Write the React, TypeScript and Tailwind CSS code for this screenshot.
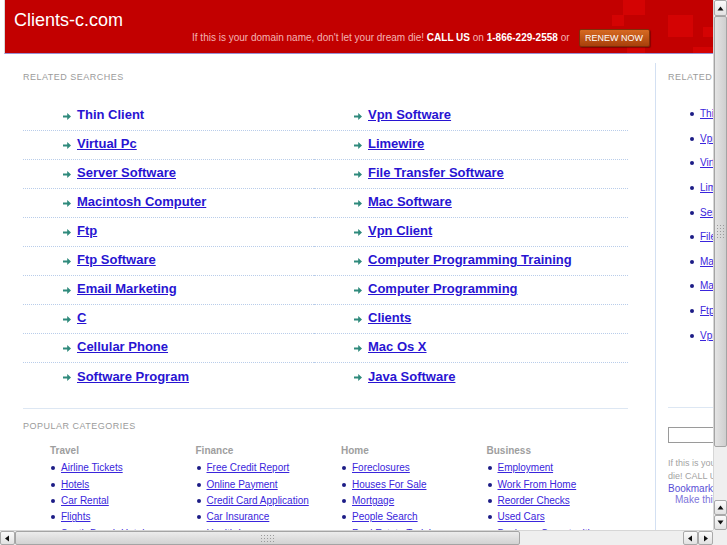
import type { ReactNode } from 'react';

const leftSearches = [
  'Thin Client',
  'Virtual Pc',
  'Server Software',
  'Macintosh Computer',
  'Ftp',
  'Ftp Software',
  'Email Marketing',
  'C',
  'Cellular Phone',
  'Software Program',
];

const rightSearches = [
  'Vpn Software',
  'Limewire',
  'File Transfer Software',
  'Mac Software',
  'Vpn Client',
  'Computer Programming Training',
  'Computer Programming',
  'Clients',
  'Mac Os X',
  'Java Software',
];

const sideSearches = [
  'Thin Client',
  'Vpn Software',
  'Virtual Pc',
  'Limewire',
  'Server Software',
  'File Transfer Software',
  'Macintosh Computer',
  'Mac Software',
  'Ftp',
  'Vpn Client',
];

const categories = [
  { title: 'Travel', items: ['Airline Tickets', 'Hotels', 'Car Rental', 'Flights', 'South Beach Hotels'] },
  { title: 'Finance', items: ['Free Credit Report', 'Online Payment', 'Credit Card Application', 'Car Insurance', 'Health Insurance'] },
  { title: 'Home', items: ['Foreclosures', 'Houses For Sale', 'Mortgage', 'People Search', 'Real Estate Training'] },
  { title: 'Business', items: ['Employment', 'Work From Home', 'Reorder Checks', 'Used Cars', 'Business Opportunities'] },
];

const squares = [
  'left-[618px] top-0 w-[22px] h-[15px]',
  'left-[607px] top-[15px] w-[12px] h-[11px]',
  'left-[663px] top-[15px] w-[25px] h-[22px]',
  'left-[698px] top-[27px] w-[15px] h-[10px]',
  'left-[622px] top-[32px] w-[18px] h-[21px]',
  'left-[688px] top-[47px] w-[22px] h-[6px]',
];

function Arrow() {
  return (
    <svg width="8" height="7" viewBox="0 0 8 7" className="shrink-0">
      <path d="M0 2.4h4.2V0L8 3.5 4.2 7V4.6H0z" fill="#2f8a7c" />
    </svg>
  );
}

function SearchRow({ label, last }: { label: string; last: boolean }) {
  return (
    <div
      className={
        'h-[29px] flex items-center pl-[40px] gap-[6px] ' +
        (last ? '' : 'border-b border-dotted border-[#b9cdea]')
      }
    >
      <Arrow />
      <a
        href="#"
        className={
          'text-[13px] font-bold text-[#2814d2] leading-[16px] -mt-[2px] ' +
          (label === 'Thin Client' ? 'no-underline' : 'underline')
        }
      >
        {label}
      </a>
    </div>
  );
}

function ArrowBtn({ dir }: { dir: 'up' | 'down' | 'left' | 'right' }) {
  const paths: Record<string, string> = {
    up: 'M1.5 6.5L4.5 2.5 7.5 6.5z',
    down: 'M1.5 2.5L4.5 6.5 7.5 2.5z',
    left: 'M6 1.5L2 4.5 6 7.5z',
    right: 'M3 1.5L7 4.5 3 7.5z',
  };
  return (
    <div className="w-full h-full flex items-center justify-center bg-gradient-to-b from-[#fbfbfb] to-[#e2e2e2] border border-[#a9a9a9] rounded-[2px]">
      <svg width="9" height="9" viewBox="0 0 9 9">
        <path d={paths[dir]} fill="#111" />
      </svg>
    </div>
  );
}

function Grip({ vertical }: { vertical?: boolean }) {
  return (
    <div className={vertical ? 'grid grid-cols-3 gap-[2px]' : 'grid grid-cols-5 gap-[2px]'}>
      {Array.from({ length: 15 }).map((_, i) => (
        <div key={i} className="w-[1px] h-[1px] bg-[#9a9a9a]" />
      ))}
    </div>
  );
}

function Panel({ children }: { children: ReactNode }) {
  return <div className="w-[713px] h-[530px] overflow-hidden bg-white">{children}</div>;
}

export default function App() {
  return (
    <div
      className="w-[727px] h-[545px] overflow-hidden bg-white flex flex-col"
      style={{ fontFamily: '"Liberation Sans", Arial, sans-serif' }}
    >
      <div className="flex">
        <Panel>
          <div className="w-[950px]">
            {/* header */}
            <header className="relative ml-[4px] h-[54px] bg-[#c20000] border-l border-[#d8d8d8] border-b border-b-[#9b90d2] flex items-start">
              {squares.map((s) => (
                <div key={s} className={'absolute bg-[#d40303] ' + s} />
              ))}
              <div className="relative pl-[9px] pt-[10px] text-[18px] leading-[21px] text-white">Clients-c.com</div>
              <div className="relative ml-[69px] mt-[29px] flex items-center gap-[9px]">
                <span className="text-[10px] leading-[12px] text-[#f3b3b3] whitespace-nowrap">
                  If this is your domain name, don't let your dream die!{' '}
                  <b className="text-white">CALL US</b> on <b className="text-white">1-866-229-2558</b> or
                </span>
                <button className="h-[18px] w-[71px] rounded-[2px] border border-[#7e2f08] bg-gradient-to-b from-[#d66a22] to-[#a8400b] text-white text-[9px] leading-[16px] shadow-[1px_1px_1px_rgba(80,0,0,0.5)]">
                  RENEW NOW
                </button>
              </div>
            </header>

            <main className="flex mt-[9px]">
              {/* left content */}
              <div className="ml-[23px] w-[605px] pt-[9px]">
                <div className="text-[9px] leading-[11px] tracking-[0.5px] text-[#9b9b9b]">RELATED SEARCHES</div>
                <div className="mt-[19px] grid grid-cols-[291px_314px]">
                  <div className="flex flex-col">
                    {leftSearches.map((s, i) => (
                      <SearchRow key={s} label={s} last={i === leftSearches.length - 1} />
                    ))}
                  </div>
                  <div className="flex flex-col">
                    {rightSearches.map((s, i) => (
                      <SearchRow key={s} label={s} last={i === rightSearches.length - 1} />
                    ))}
                  </div>
                </div>

                <div className="mt-[16px] border-t border-[#dde7f3]" />
                <div className="mt-[12px] text-[9px] leading-[11px] tracking-[0.5px] text-[#9b9b9b]">POPULAR CATEGORIES</div>
                <div className="mt-[13px] pl-[27px] grid grid-cols-[145.5px_145.5px_145.5px_145.5px]">
                  {categories.map((c) => (
                    <div key={c.title}>
                      <div className="text-[10px] leading-[12px] font-bold text-[#9e9e9e]">{c.title}</div>
                      <ul className="mt-[3px]">
                        {c.items.map((it) => (
                          <li key={it} className="flex items-center gap-[6px] pl-[1px] h-[16.4px]">
                            <span className="w-[4px] h-[4px] rounded-full bg-[#1c1c86] shrink-0" />
                            <a href="#" className="text-[10px] leading-[12px] text-[#3a25dc] underline whitespace-nowrap">
                              {it}
                            </a>
                          </li>
                        ))}
                      </ul>
                    </div>
                  ))}
                </div>
              </div>

              {/* sidebar */}
              <aside className="ml-[27px] w-[250px] border-l border-[#d3e0f2] pl-[12px] pt-[9px] pb-[60px]">
                <div className="text-[9px] leading-[11px] tracking-[0.5px] text-[#9b9b9b]">RELATED SEARCHES</div>
                <ul className="mt-[19px] pl-[22px]">
                  {sideSearches.map((s) => (
                    <li key={s} className="h-[24.6px] flex items-center gap-[6px]">
                      <span className="w-[4px] h-[4px] rounded-full bg-[#1c1c86] shrink-0" />
                      <a href="#" className="text-[10px] leading-[12px] text-[#3a25dc] underline whitespace-nowrap">
                        {s}
                      </a>
                    </li>
                  ))}
                </ul>
                <div className="mt-[59px] border-t border-[#dde7f3]" />
                <input className="mt-[19px] block w-[160px] h-[16px] border border-[#9a9a9a] bg-white" />
                <p className="mt-[14px] text-[9px] leading-[13px] text-[#a3a3a3] w-[200px]">
                  If this is your domain name, don't let your dream die! CALL US on 1-866-229-2558
                </p>
                <a href="#" className="block text-[10px] leading-[11px] text-[#5a4fd6]">Bookmark this page</a>
                <a href="#" className="block pl-[7px] text-[10px] leading-[11px] text-[#7d74db]">Make this page your homepage</a>
              </aside>
            </main>
          </div>
        </Panel>

        {/* vertical scrollbar */}
        <div className="w-[14px] h-[530px] flex flex-col bg-[#efefef] border-l border-[#d6d6d6]">
          <div className="h-[16px]">
            <ArrowBtn dir="up" />
          </div>
          <div className="h-[431px] bg-gradient-to-r from-[#e4e4e4] to-[#cfcfcf] border border-[#a4a4a4] rounded-[2px] flex items-center justify-center">
            <Grip vertical />
          </div>
          <div className="flex-1" />
          <div className="h-[15px]">
            <ArrowBtn dir="up" />
          </div>
          <div className="h-[15px]">
            <ArrowBtn dir="down" />
          </div>
        </div>
      </div>

      {/* horizontal scrollbar */}
      <div className="flex h-[15px]">
        <div className="w-[713px] flex bg-[#efefef] border-t border-[#d6d6d6]">
          <div className="w-[15px]">
            <ArrowBtn dir="left" />
          </div>
          <div className="w-[505px] bg-gradient-to-b from-[#ececec] to-[#d2d2d2] border border-[#a4a4a4] rounded-[2px] flex items-center justify-center">
            <Grip />
          </div>
          <div className="flex-1" />
          <div className="w-[15px]">
            <ArrowBtn dir="left" />
          </div>
          <div className="w-[15px]">
            <ArrowBtn dir="right" />
          </div>
        </div>
        <div className="w-[14px] bg-[#efefef]" />
      </div>
    </div>
  );
}
